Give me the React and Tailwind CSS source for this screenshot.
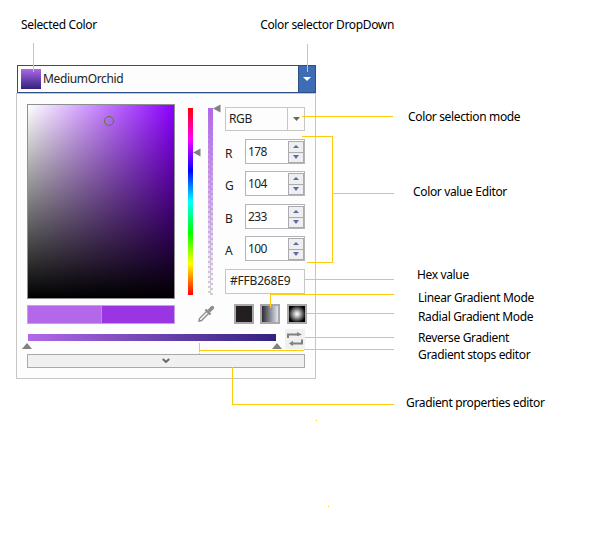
import React from "react";

const channels = [
  { name: "R", value: "178", gap: "mt-2" },
  { name: "G", value: "104", gap: "mt-[7px]" },
  { name: "B", value: "233", gap: "mt-2" },
  { name: "A", value: "100", gap: "mt-[7px]" },
];

const labels = [
  { text: "Color selection mode", style: "mt-[109px] ml-[14px] tracking-[-0.35px]" },
  { text: "Color value Editor", style: "mt-[59px] ml-[19px] tracking-[-0.35px]" },
  { text: "Hex value", style: "mt-[67px] ml-[23px] tracking-[-0.35px]" },
  { text: "Linear Gradient Mode", style: "mt-[7px] ml-[24px] tracking-[-0.35px]" },
  { text: "Radial Gradient Mode", style: "mt-[3px] ml-[24px] tracking-[-0.35px]" },
  { text: "Reverse Gradient", style: "mt-[5px] ml-[24px] tracking-[-0.35px]" },
  { text: "Gradient stops editor", style: "mt-[1px] ml-[24px] tracking-[-0.35px]" },
  { text: "Gradient properties editor", style: "mt-[32px] ml-[12px] tracking-[-0.35px]" },
];

function Triangle({ w, h, points, fill }) {
  return (
    <svg width={w} height={h} viewBox={`0 0 ${w} ${h}`} className="block shrink-0">
      <polygon points={points} fill={fill} />
    </svg>
  );
}

function Header() {
  return (
    <div className="ml-px flex h-7 w-[299px] border border-[#2c5086] bg-[#fdfdfd]">
      <div className="mt-[3px] ml-[3px] h-5 w-5 bg-linear-to-b from-[#b068e8] to-[#33217e]" />
      <div className="ml-[2px] flex-1 text-[12px] leading-[26px] tracking-[-0.35px] text-[#222]">MediumOrchid</div>
      <div className="flex w-[17px] items-center justify-center border-l border-[#2c5086] bg-[#3f6db5]">
        <Triangle w={8} h={4} points="0,0 8,0 4,4" fill="#fff" />
      </div>
    </div>
  );
}

function Spinner() {
  return (
    <div className="flex w-4 flex-col border border-[#aaabb0] bg-[#aaabb0] gap-px">
      <div className="flex flex-1 items-center justify-center bg-[#efeff0]">
        <Triangle w={6} h={3} points="0,3 6,3 3,0" fill="#5b6aa5" />
      </div>
      <div className="flex flex-1 items-center justify-center bg-[#efeff0]">
        <Triangle w={6} h={4} points="0,0 6,0 3,4" fill="#5b6aa5" />
      </div>
    </div>
  );
}

function Sliders() {
  return (
    <div className="mt-[10px] ml-[13px] flex h-[195px] items-start">
      <div className="mt-1 h-[187px] w-[5px] bg-[linear-gradient(#f00,#f0f_16.6%,#00f_50%,#0ff_50%,#f00)]" style={{ backgroundImage: "linear-gradient(#f00,#f0f 16.67%,#00f 33.33%,#0ff 50%,#0f0 66.67%,#ff0 83.33%,#f00)" }} />
      <div className="mt-11 w-[15px]">
        <Triangle w={8} h={9} points="0,4.5 7.5,0.5 7.5,8.5" fill="#808080" />
      </div>
      <div className="mt-1 h-[187px] w-[5px] bg-[repeating-conic-gradient(#d0d0d0_0_25%,#fff_0_50%)] bg-size-[5px_5px]">
        <div className="h-full bg-linear-to-b from-[#b268e9] to-[#b268e900]" />
      </div>
      <Triangle w={8} h={9} points="0,4.5 7.5,0.5 7.5,8.5" fill="#808080" />
    </div>
  );
}

function Editors() {
  return (
    <div className="mt-[13px] ml-1 w-20 text-[12px] text-[#222]">
      <div className="flex h-6 border border-[#c6c6c6]">
        <div className="flex-1 pl-[3px] leading-[22px] tracking-[-0.4px]">RGB</div>
        <div className="flex w-[17px] items-center justify-center border-l border-[#c6c6c6]">
          <Triangle w={7} h={4} points="0,0 7,0 3.5,4" fill="#666" />
        </div>
      </div>
      {channels.map((c) => (
        <div key={c.name} className={`flex h-[25px] ${c.gap} first:mt-0`}>
          <div className="w-5 pt-[2px] leading-[25px]">{c.name}</div>
          <div className="flex w-[60px] border border-[#b4b4b9] bg-white pt-px">
            <div className="flex-1 pl-[2px] leading-[22px] tracking-[-0.6px]">{c.value}</div>
            <Spinner />
          </div>
        </div>
      ))}
      <div className="mt-2 h-[25px] border border-[#c6c6c6] pl-1 leading-[22px] tracking-[-0.2px]">#FFB268E9</div>
    </div>
  );
}

function Eyedropper() {
  return (
    <svg width="18" height="18" viewBox="0 0 18 18" className="mt-px ml-[22px] block">
      <path d="M10 6 L2.5 13.5 L2 16 L4.5 15.5 L12 8" fill="#fdfdfd" stroke="#8d8d8d" strokeWidth="1.4" />
      <path d="M8.5 4.5 L13.5 9.5" stroke="#8d8d8d" strokeWidth="2.4" />
      <path d="M10.5 5 L14 1.3 Q15.5 0.3 16.6 1.5 Q17.7 2.8 16.7 4 L13 7.6 Z" fill="#8d8d8d" />
    </svg>
  );
}

function ReverseIcon() {
  return (
    <svg width="20" height="20" viewBox="0 0 20 20">
      <path d="M3 9 V5.5 H14 M17 10.5 V14.5 H6" fill="none" stroke="#808080" strokeWidth="2" />
      <path d="M12 3 L17 5.8 L12 7 Z M8 11.7 L4 14.5 L8 17 Z" fill="#808080" />
    </svg>
  );
}

function Panel() {
  return (
    <div className="h-[286px] w-[300px] border border-[#c6c6c6] bg-[#fdfdfd]">
      <div className="flex h-[205px]">
        <div className="mt-[10px] ml-[10px] h-[195px] w-[148px] border border-[#8f8f8f] bg-[linear-gradient(to_top,#000,transparent),linear-gradient(to_right,#fff,#8c00ff)]">
          <div className="mt-[11px] ml-[76px] h-[10px] w-[10px] rounded-full border border-[#587a3c]" />
        </div>
        <Sliders />
        <Editors />
      </div>
      <div className="flex h-[30px]">
        <div className="mt-[6px] ml-[10px] flex h-[19px] w-[148px] border border-[#c7a0dd] bg-[#9935e2]">
          <div className="w-[74px] border-r border-[#c083e9] bg-[#b268e9]" />
        </div>
        <div className="mt-[5px] flex">
          <Eyedropper />
          <div className="ml-[19px] h-5 w-5 border-2 border-[#a9a9a9] bg-[#231f20]" />
          <div className="ml-[6px] h-5 w-5 border-2 border-[#a9a9a9] bg-[linear-gradient(to_right,#2f2b30,#dfe8f4)]" />
          <div className="ml-[7px] h-5 w-5 border-2 border-[#a9a9a9] bg-[radial-gradient(circle,#fff_0%,#bbb_25%,#000_78%)]" />
        </div>
      </div>
      <div className="flex h-[25px]">
        <div className="ml-[5px] w-[260px]">
          <div className="mt-[5px] ml-[6px] h-[7px] w-[248px] bg-linear-to-r from-[#b268e9] to-[#33217e]" />
          <div className="mt-[2px] flex justify-between">
            <Triangle w={10} h={6} points="0,6 10,6 5,0" fill="#808080" />
            <Triangle w={10} h={6} points="0,6 10,6 5,0" fill="#808080" />
          </div>
        </div>
        <div className="ml-[3px] h-5 w-5 bg-[#f0f0f0]">
          <ReverseIcon />
        </div>
      </div>
      <div className="ml-[10px] flex h-[14px] w-[278px] items-center justify-center border border-[#a9a9a9] bg-[#f0f0f0]">
        <svg width="8" height="6" viewBox="0 0 8 6">
          <path d="M0.8 1 L4 4 L7.2 1" fill="none" stroke="#666" strokeWidth="2" />
        </svg>
      </div>
    </div>
  );
}

function Callouts() {
  return (
    <svg className="pointer-events-none absolute inset-0" width="603" height="542" shapeRendering="crispEdges">
      <g fill="none" stroke="#ffc90e" strokeWidth="1">
        <path d="M33.5 43V72 M307.5 44V72 M302 116.5H393" />
        <path d="M302 136.5H332.5V262.5H307 M333 193.5H394" />
        <path d="M305 279.5H394 M394 294.5H270.5V308 M307 313.5H394 M305 337.5H394" />
        <path d="M199.5 343V352 M199.5 353V354 M199 350.5H304 M304 349.5H394" />
        <path d="M232.5 367V404.5H394 M316 420.5H317 M328 506.5H329" />
      </g>
    </svg>
  );
}

export default function App() {
  return (
    <div className="relative h-[542px] w-[603px] overflow-hidden bg-white font-['Noto_Sans','Open_Sans',sans-serif] text-[12px] text-black">
      <div className="flex">
        <div className="w-[394px]">
          <div className="flex h-[65px] pt-[17px] leading-4 tracking-[-0.35px] whitespace-nowrap">
            <div className="ml-[21px] w-[243px]">Selected Color</div>
            <div>Color selector DropDown</div>
          </div>
          <div className="ml-4">
            <Header />
            <Panel />
          </div>
        </div>
        <div className="flex flex-col items-start">
          {labels.map((l) => (
            <div key={l.text} className={`leading-4 whitespace-nowrap ${l.style}`}>{l.text}</div>
          ))}
        </div>
      </div>
      <Callouts />
    </div>
  );
}
